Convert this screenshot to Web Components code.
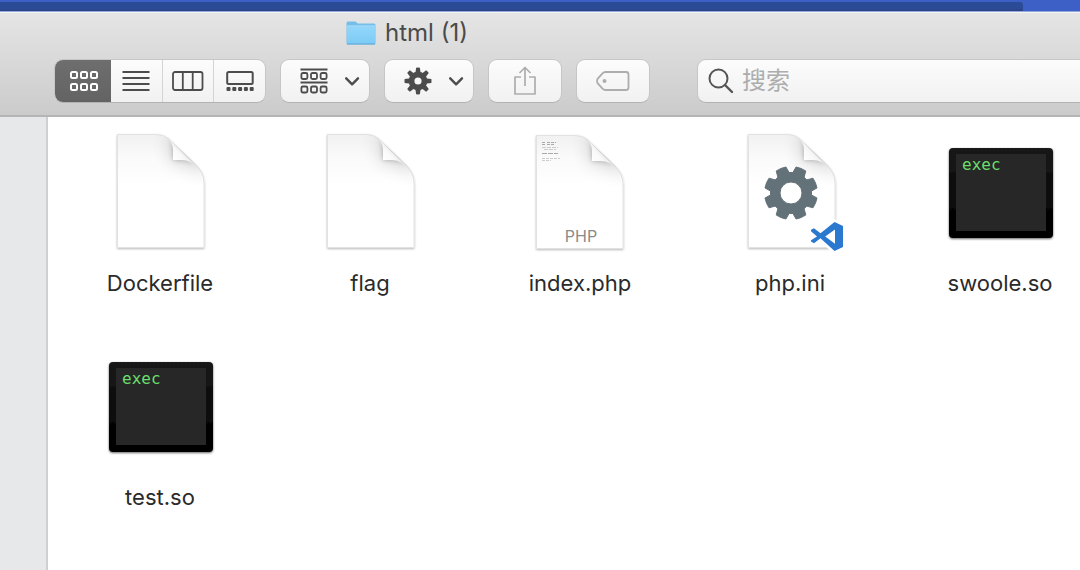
<!DOCTYPE html>
<html lang="zh-CN">
<head>
<meta charset="utf-8">
<title>html (1)</title>
<style>
  html, body { height: 100%; margin: 0; }
  body { font-family: Inter, "Noto Sans CJK SC", sans-serif; font-optical-sizing: none; color: #2a2a2a; background: #3c60c6; overflow: hidden; }
</style>
</head>
<body>
<finder-window></finder-window>

<script>
const define = (name, html, setup) => {
  const tpl = document.createElement('template');
  tpl.innerHTML = html;
  customElements.define(name, class extends HTMLElement {
    connectedCallback() {
      if (this.shadowRoot) return;
      this.attachShadow({ mode: 'open' }).append(tpl.content.cloneNode(true));
      if (setup) setup(this, this.shadowRoot);
    }
  });
};

/* Outline of a toothed wheel centred on cx, cy, with a round hole. */
const gearPath = (cx, cy, outer, root, hole, teeth, rootHalf, tipHalf, turn) => {
  const pt = (r, a) => (cx + r * Math.cos(a)).toFixed(2) + ' ' + (cy + r * Math.sin(a)).toFixed(2);
  let d = '';
  for (let i = 0; i < teeth; i++) {
    const a = turn + i * 2 * Math.PI / teeth;
    d += (i ? `A${root} ${root} 0 0 1 ` : 'M') + pt(root, a - rootHalf)
      + 'L' + pt(outer, a - tipHalf) + `A${outer} ${outer} 0 0 1 ` + pt(outer, a + tipHalf)
      + 'L' + pt(root, a + rootHalf);
  }
  d += `A${root} ${root} 0 0 1 ` + pt(root, turn - rootHalf) + 'Z';
  return d + `M${cx - hole} ${cy}a${hole} ${hole} 0 1 0 ${2 * hole} 0a${hole} ${hole} 0 1 0 ${-2 * hole} 0Z`;
};

const cells = (xs, ys, w, h, r = 1.5) => ys.map(y => xs.map(x =>
  `<rect x="${x}" y="${y}" width="${w}" height="${h}" rx="${r}"/>`).join('')).join('');

const glyphs = {
  icons: [28, 20, `<g fill="none" stroke="currentColor" stroke-width="2">${cells([1, 11, 21], [1, 13], 6, 6)}</g>`],
  list: [28, 20, `<path d="M.5 1h27M.5 7h27M.5 13h27M.5 19h27" fill="none" stroke="currentColor" stroke-width="2"/>`],
  columns: [32, 20, `<g fill="none" stroke="currentColor" stroke-width="1.800"><rect x="1" y="1" width="29.500" height="18" rx="2"/><path d="M10.800 1v18M20.700 1v18"/></g>`],
  gallery: [28, 20, `<rect x="1.200" y="1" width="25.500" height="12" rx="1.500" fill="none" stroke="currentColor" stroke-width="2"/><g fill="currentColor">${cells([.5, 6.300, 12.100, 17.900, 23.700], [16], 4, 4, 1)}</g>`],
  group: [28, 26, `<path d="M.5 1.500h27M.5 14.500h27" stroke="currentColor" stroke-width="1.800"/><g fill="none" stroke="currentColor" stroke-width="1.800">${cells([1.400, 11, 20.600], [5, 18.500], 6, 6)}</g>`],
  gear: [28, 28, `<path fill="currentColor" fill-rule="evenodd" d="${gearPath(14, 14, 13.5, 9.3, 3.6, 8, .27, .14, 0)}"/>`],
  chevron: [16, 16, `<path d="M2.200 5.300l5.900 6 5.900-6" fill="none" stroke="currentColor" stroke-width="2.400" stroke-linecap="round" stroke-linejoin="round"/>`],
  share: [24, 30, `<path d="M8 11H2v17h20V11h-6M12 20V2M6.500 7L12 1.500 17.500 7" fill="none" stroke="currentColor" stroke-width="1.700" stroke-linejoin="round"/>`],
  tag: [34, 20, `<path d="M9.500 1H30q2.500 0 2.500 2.500v13q0 2.500-2.500 2.500H9.500Q7.800 19 6.500 17.700L1.800 12.400Q.3 10 1.800 7.600L6.500 2.300Q7.800 1 9.500 1z" fill="none" stroke="currentColor" stroke-width="1.800"/><circle cx="8.500" cy="10" r="2" fill="currentColor"/>`],
  search: [26, 26, `<circle cx="10.500" cy="10.500" r="9" fill="none" stroke="currentColor" stroke-width="2"/><path d="M17 17l7 7" stroke="currentColor" stroke-width="2.400" stroke-linecap="round"/>`],
  folder: [30, 26, `<defs><linearGradient id="f" x2="0" y2="1"><stop stop-color="#93d6fa"/><stop offset="1" stop-color="#7ccbf6"/></linearGradient></defs><path d="M.5 3q0-1.500 1.500-1.500h7q1 0 1.700 1t1.800 1H28q1.500 0 1.500 1.500v18q0 1.500-1.500 1.500H2Q.5 24.500.5 23z" fill="#74bfe9"/><path d="M1 6.500h28V22q0 1.500-1.500 1.500h-25Q1 23.500 1 22z" fill="url(#f)"/><path d="M1 6h28" stroke="#b4e2fb"/><path d="M1 24h28" stroke="#62a9d4"/>`]
};

define('ui-glyph', `<style>:host { display: inline-flex; flex: none; } svg { display: block; }</style>`, (host, root) => {
  const [w, h, body] = glyphs[host.getAttribute('name')];
  root.innerHTML += `<svg width="${w}" height="${h}" viewBox="0 0 ${w} ${h}" aria-hidden="true">${body}</svg>`;
});

define('tool-button', `
<style>
  :host { display: flex; width: 74px; height: 44px; color: #4c4c4c; }
  :host([menu]) { width: 90px; }
  :host([faded]) { color: #adadad; }
  button { flex: 1; display: flex; align-items: center; justify-content: center; gap: 16px; margin: 0; padding: 0;
    border: 1px solid #c6c6c6; border-bottom-color: #b2b2b2; border-radius: 9px; color: inherit;
    background: linear-gradient(#fcfcfc, #f1f1f1); }
  :host([menu]) button { justify-content: flex-end; padding-right: 9px; }
</style>
<button type="button"><slot></slot></button>`,
(host, root) => root.querySelector('button').setAttribute('aria-label', host.getAttribute('label')));

define('view-switch', `
<style>
  :host { display: flex; width: 212px; height: 44px; box-sizing: border-box; border: 1px solid #c6c6c6; border-bottom-color: #b2b2b2;
    border-radius: 9px; overflow: hidden; background: linear-gradient(#fcfcfc, #f1f1f1); color: #4c4c4c; }
  button { flex: 1; display: flex; align-items: center; justify-content: center; margin: 0; padding: 0; border: 0;
    border-left: 1px solid #d4d4d4; background: none; color: inherit; }
  button[aria-pressed] { flex: 0 0 56px; padding-left: 2px; border: 0; background: linear-gradient(#6e6e6e, #636363); color: #fff; box-sizing: border-box; }
  button[aria-pressed] + button { border: 0; }
</style>
<button type="button" aria-label="图标" aria-pressed="true"><ui-glyph name="icons"></ui-glyph></button>
<button type="button" aria-label="列表"><ui-glyph name="list"></ui-glyph></button>
<button type="button" aria-label="分栏"><ui-glyph name="columns"></ui-glyph></button>
<button type="button" aria-label="画廊"><ui-glyph name="gallery"></ui-glyph></button>`);

define('search-field', `
<style>
  :host { display: flex; flex: 1; min-width: 0; height: 44px; }
  label { flex: 1; display: flex; align-items: center; gap: 8px; min-width: 0; padding-left: 10px; color: #555;
    border: 1px solid #c6c6c6; border-bottom-color: #b2b2b2; border-right: 0; border-radius: 9px 0 0 9px;
    background: linear-gradient(#fcfcfc, #f1f1f1); }
  input { flex: 1; min-width: 0; height: 36px; margin: 0; padding: 0; border: 0; outline: 0; background: none;
    font: 24px/36px Inter, "Noto Sans CJK SC", sans-serif; color: #333; }
  input::placeholder { color: #adadad; opacity: 1; }
</style>
<label><ui-glyph name="search"></ui-glyph><input type="text" placeholder="搜索" aria-label="搜索"></label>`);

/* Blank page with a curled corner, 88 by 114, with its top left corner at 0 0. */
const outline = 'M.5.5H40Q47 .5 52 5L79 31Q87 39 87 49V113.500H.5z';
const curl = 'M48 2Q56 7 56 16V26H64Q75 26 82 35L52 5z';
const page = `
<defs>
  <linearGradient id="shade" x1="0" y1="0" x2="0" y2="1"><stop stop-color="#f1f1f1"/><stop offset=".2" stop-color="#fafafa"/><stop offset=".45" stop-color="#fff"/></linearGradient>
  <linearGradient id="curl" gradientUnits="userSpaceOnUse" x1="56" y1="26" x2="67" y2="16"><stop stop-color="#fff"/><stop offset=".6" stop-color="#f8f8f8"/><stop offset="1" stop-color="#e6e6e6"/></linearGradient>
  <clipPath id="edge"><path d="${outline}"/></clipPath>
  <filter id="near" x="-50%" y="-50%" width="200%" height="200%"><feGaussianBlur stdDeviation="2.500"/></filter>
  <filter id="far" x="-80%" y="-80%" width="260%" height="260%"><feGaussianBlur stdDeviation="9"/></filter>
  <filter id="soft" x="-10%" y="-10%" width="120%" height="120%"><feDropShadow dx="0" dy="1" stdDeviation="1" flood-opacity=".28"/></filter>
</defs>
<path d="${outline}" fill="url(#shade)" stroke="#e2e2e2" filter="url(#soft)"/>
<g clip-path="url(#edge)">
  <path d="M42 0Q54 5 54 16V29H64Q78 29 88 44V10z" opacity=".16" filter="url(#far)"/>
  <path d="${curl}" opacity=".26" filter="url(#near)"/>
</g>
<path d="${curl}" fill="url(#curl)"/>`;

const pictures = {
  page: `<g transform="translate(22 7)">${page}</g>`,
  php: `<g transform="translate(21 8)">${page}
    <g stroke="#aaa" stroke-width="1"><path d="M6 7.500h4m1 0h9M6 9.500h3m2 0h8" stroke-dasharray="3 1"/><path d="M6 12.500h16M8 14.500h12" stroke="#ccc" stroke-dasharray="4 1"/><path d="M6 18.500h16" stroke-dasharray="5 1"/><path d="M6 23.500h18M6 25.500h9" stroke="#ccc" stroke-dasharray="3 1"/></g></g>
    <text x="66" y="115" text-anchor="middle" font-size="16" fill="#8a8a8a">PHP</text>`,
  ini: `<g transform="translate(23 7)">${page}</g>
    <path d="${gearPath(66, 66, 26.5, 20.5, 11, 8, .3, .2, Math.PI / 8)}" fill="#637178" stroke="#637178" stroke-linejoin="round" fill-rule="evenodd"/>
    <g stroke="#fff" stroke-width="5" stroke-linejoin="round" fill="#fff"><path d="M109 95l9 4v21l-9 4-20-19z"/></g>
    <path d="M109.500 95l8.500 4v21l-8.500 4-14-12.800-6.500 5-3-1.600v-1.400L92 109.500 86 104.200v-1.400l3-1.600 6.500 5zM110 102.500l-9.800 7 9.800 7.200z" fill="#2b78cf" fill-rule="evenodd"/>`,
  exec: `<defs><linearGradient id="frame" x2="0" y2="1"><stop stop-color="#1a1a1a"/><stop offset=".5" stop-color="#0a0a0a"/><stop offset="1" stop-color="#000"/></linearGradient>
    <filter id="drop" x="-10%" y="-10%" width="120%" height="120%"><feDropShadow dx="0" dy="1" stdDeviation="1.200" flood-opacity=".6"/></filter></defs>
    <rect x="14" y="21" width="104" height="90" rx="4" fill="url(#frame)" filter="url(#drop)"/>
    <rect x="21" y="27" width="90" height="77" fill="#272727"/>
    <text x="27" y="43" font-family="DejaVu Sans Mono, monospace" font-size="16" fill="#6ade6c">exec</text>`
};

define('file-item', `
<style>
  :host { display: flex; flex-direction: column; align-items: center; gap: 14px; min-width: 0; }
  svg { display: block; width: 130px; height: 128px; overflow: visible; font-family: Inter, sans-serif; }
  span { font-size: 22px; line-height: 28px; white-space: nowrap; }
</style>
<svg viewBox="0 0 130 128"></svg><span><slot></slot></span>`,
(host, root) => root.querySelector('svg').innerHTML = pictures[host.getAttribute('kind')]);

define('file-grid', `
<style>
  :host { display: grid; grid-template-columns: repeat(auto-fill, 130px); gap: 44px 80px; align-content: start;
    flex: 1; min-width: 0; padding: 10px 0 0 47px; background: #fff; overflow: hidden; }
</style>
<slot></slot>`);

define('window-header', `
<style>
  :host { display: block; border-top: 1px solid #f4f4f4; border-bottom: 2px solid #b5b5b5; background: linear-gradient(#e5e5e5, #cbcbcb); }
  h1 { display: flex; align-items: center; gap: 9px; margin: 0; padding: 4px 0 11px 346px; color: #4a4a4a;
    font-size: 24px; line-height: 31px; font-weight: 400; }
  nav { display: flex; gap: 14px; padding: 0 0 12px 54px; }
  search-field { margin-left: 33px; }
</style>
<h1><ui-glyph name="folder"></ui-glyph><slot></slot></h1>
<nav>
  <view-switch></view-switch>
  <tool-button menu label="分组"><ui-glyph name="group"></ui-glyph><ui-glyph name="chevron"></ui-glyph></tool-button>
  <tool-button menu label="操作"><ui-glyph name="gear"></ui-glyph><ui-glyph name="chevron"></ui-glyph></tool-button>
  <tool-button faded label="共享"><ui-glyph name="share"></ui-glyph></tool-button>
  <tool-button faded label="标签"><ui-glyph name="tag"></ui-glyph></tool-button>
  <search-field></search-field>
</nav>`);

define('finder-window', `
<style>
  :host { display: flex; flex-direction: column; min-height: 100%; height: 100vh; }
  .behind { flex: none; height: 9px; margin: 2px 57px 0 0; border-radius: 0 3px 0 0; background: linear-gradient(#2c4b97 70%, #2b4283); }
  .edge { flex: none; height: 1px; background: #93a9dc; }
  window-header { flex: none; }
  main { flex: 1; display: flex; min-height: 0; }
  aside { flex: 0 0 46px; border-right: 2px solid #cfcfd1; background: #e7e8ea; }
</style>
<div class="behind"></div><div class="edge"></div>
<window-header>html (1)</window-header>
<main>
  <aside></aside>
  <file-grid>
    <file-item kind="page">Dockerfile</file-item>
    <file-item kind="page">flag</file-item>
    <file-item kind="php">index.php</file-item>
    <file-item kind="ini">php.ini</file-item>
    <file-item kind="exec">swoole.so</file-item>
    <file-item kind="exec">test.so</file-item>
  </file-grid>
</main>`);
</script>
</body>
</html>
